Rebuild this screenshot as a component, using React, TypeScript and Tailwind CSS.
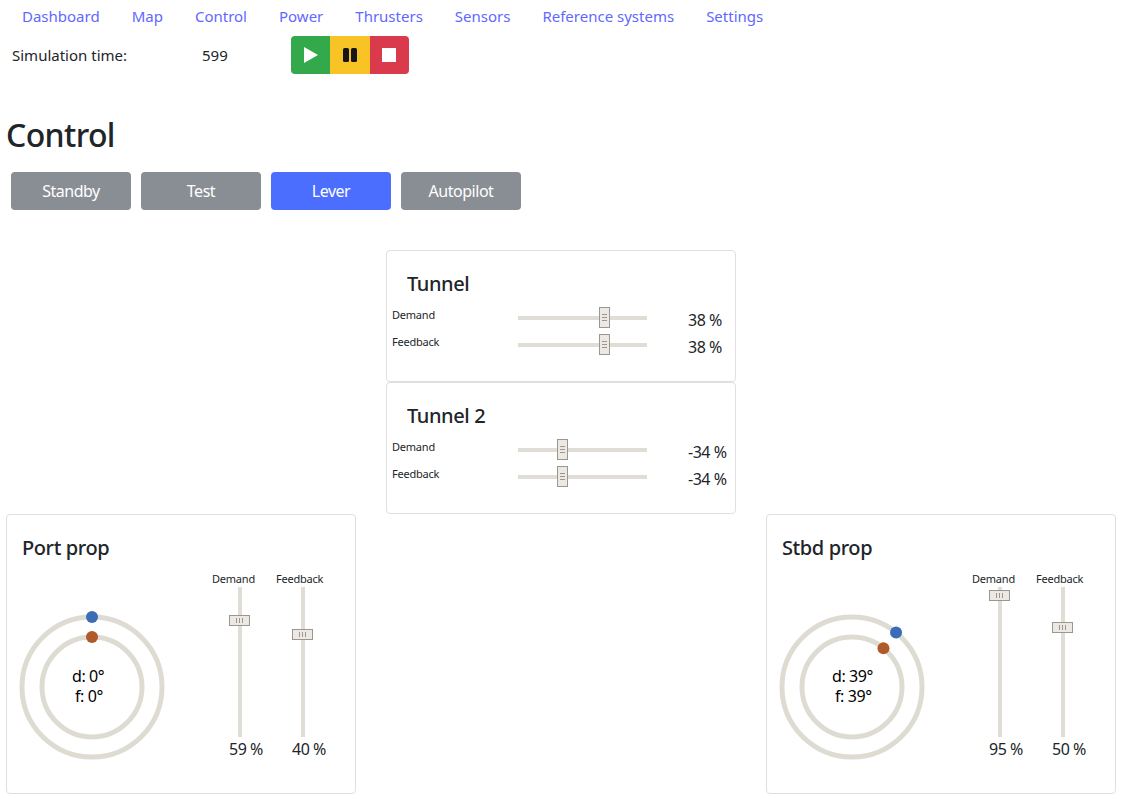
import React from "react";

const links = ["Dashboard", "Map", "Control", "Power", "Thrusters", "Sensors", "Reference systems", "Settings"];

const modes = [
  { name: "Standby", active: false },
  { name: "Test", active: false },
  { name: "Lever", active: true },
  { name: "Autopilot", active: false },
];

function HSlider({ value }: { value: number }) {
  const left = ((value + 100) / 200) * 118;
  return (
    <div className="relative w-[129px] h-[21px] flex items-center">
      <div className="w-full h-1 bg-[#e0dcd6]" />
      <div
        className="absolute top-0 w-[11px] h-[21px] border border-[#9c978e] bg-[#ece9e4] flex flex-col items-center justify-center gap-[2px]"
        style={{ left }}
      >
        <span className="w-[5px] h-px bg-[#9c978e]" />
        <span className="w-[5px] h-px bg-[#9c978e]" />
        <span className="w-[5px] h-px bg-[#9c978e]" />
      </div>
    </div>
  );
}

function VSlider({ value }: { value: number }) {
  const top = (1 - (value + 100) / 200) * 139;
  return (
    <div className="relative h-[150px] w-[21px] flex justify-center">
      <div className="h-full w-1 bg-[#e0dcd6]" />
      <div
        className="absolute left-0 w-[21px] h-[11px] border border-[#9c978e] bg-[#ece9e4] flex items-center justify-center gap-[2px]"
        style={{ top }}
      >
        <span className="h-[5px] w-px bg-[#9c978e]" />
        <span className="h-[5px] w-px bg-[#9c978e]" />
        <span className="h-[5px] w-px bg-[#9c978e]" />
      </div>
    </div>
  );
}

function TunnelCard({ title, demand, feedback }: { title: string; demand: number; feedback: number }) {
  const rows = [
    { label: "Demand", value: demand },
    { label: "Feedback", value: feedback },
  ];
  return (
    <div className="h-[132px] border border-[#dfdfdf] rounded pt-[21px] pl-[5px]">
      <h5 className="ml-[15px] text-[20px] leading-6 font-medium text-[#212529] tracking-[-0.02em]">{title}</h5>
      <div className="mt-[11px]">
        {rows.map((row) => (
          <div key={row.label} className="flex items-start h-[27px]">
            <div className="w-[126px] text-[11px] leading-4 text-[#212529] tracking-[-0.02em]">{row.label}</div>
            <HSlider value={row.value} />
            <div className="ml-[41px] mt-px text-[16px] leading-6 whitespace-nowrap text-[#212529] tracking-[-0.03em]">
              {row.value} %
            </div>
          </div>
        ))}
      </div>
    </div>
  );
}

function Rings({ angle }: { angle: number }) {
  const rad = (angle * Math.PI) / 180;
  const cx = 85;
  const cy = 116;
  return (
    <svg width="205" height="200" viewBox="0 0 205 200" className="shrink-0">
      <circle cx={cx} cy={cy} r="70" fill="none" stroke="#dedcd2" strokeWidth="5" />
      <circle cx={cx} cy={cy} r="50" fill="none" stroke="#dedcd2" strokeWidth="5" />
      <circle cx={cx + 70 * Math.sin(rad)} cy={cy - 70 * Math.cos(rad)} r="6" fill="#3a6db5" />
      <circle cx={cx + 50 * Math.sin(rad)} cy={cy - 50 * Math.cos(rad)} r="6" fill="#b05a2a" />
      <text x="65" y="111" fontSize="16" fill="#000" letterSpacing="-0.4">d: {angle}°</text>
      <text x="68" y="131" fontSize="16" fill="#000" letterSpacing="-0.4">f: {angle}°</text>
    </svg>
  );
}

function PropCard({ title, angle, demand, feedback }: { title: string; angle: number; demand: number; feedback: number }) {
  return (
    <div className="h-[280px] border border-[#dfdfdf] rounded pt-[21px]">
      <h5 className="ml-[15px] text-[20px] leading-6 font-medium text-[#212529] tracking-[-0.02em]">{title}</h5>
      <div className="flex mt-[11px]">
        <Rings angle={angle} />
        <div className="w-[64px]">
          <div className="text-[11px] leading-4 text-[#212529] whitespace-nowrap tracking-[-0.02em]">Demand</div>
          <div className="ml-[17px]">
            <VSlider value={demand} />
            <div className="text-[16px] leading-6 whitespace-nowrap text-[#212529] tracking-[-0.03em]">{demand} %</div>
          </div>
        </div>
        <div className="w-[64px]">
          <div className="text-[11px] leading-4 text-[#212529] whitespace-nowrap tracking-[-0.02em]">Feedback</div>
          <div className="ml-[16px]">
            <VSlider value={feedback} />
            <div className="text-[16px] leading-6 whitespace-nowrap text-[#212529] tracking-[-0.03em]">{feedback} %</div>
          </div>
        </div>
      </div>
    </div>
  );
}

export default function App() {
  return (
    <div className="w-[1126px] h-[799px] overflow-hidden bg-white text-[#212529] font-['Noto_Sans',sans-serif]">
      {/* nav */}
      <nav className="flex pl-[6px] h-[36px] pt-[4px]">
        {links.map((l) => (
          <a key={l} className="px-4 text-[15px] leading-6 text-[#5f68ff] whitespace-nowrap">
            {l}
          </a>
        ))}
      </nav>

      {/* simulation bar */}
      <div className="flex items-center h-[38px] pl-[12px]">
        <div className="w-[190px] text-[15px]">Simulation time:</div>
        <div className="w-[89px] text-[15px]">599</div>
        <div className="flex rounded overflow-hidden w-[118px] h-[38px]">
          <button className="flex-1 bg-[#34a94b] flex items-center justify-center">
            <svg width="16" height="16" viewBox="0 0 16 16"><polygon points="1,0 15,8 1,16" fill="#fff" /></svg>
          </button>
          <button className="flex-1 bg-[#f7c325] flex items-center justify-center">
            <svg width="14" height="14" viewBox="0 0 14 14" fill="#16161a">
              <rect x="0" y="0" width="6" height="14" rx="1.5" />
              <rect x="8" y="0" width="6" height="14" rx="1.5" />
            </svg>
          </button>
          <button className="flex-1 bg-[#d93a4c] flex items-center justify-center">
            <div className="w-[14px] h-[14px] bg-white" />
          </button>
        </div>
      </div>

      <h2 className="pl-[6px] mt-[37px] h-[48px] text-[32px] leading-[48px] font-medium tracking-[-0.02em]">Control</h2>

      <div className="flex gap-[10px] pl-[11px] mt-[13px]">
        {modes.map((m) =>
          m.active ? (
            <button key={m.name} className="w-[120px] h-[38px] rounded text-[16px] text-white bg-[#4b6eff] tracking-[-0.03em]">
              {m.name}
            </button>
          ) : (
            <button key={m.name} className="w-[120px] h-[38px] rounded text-[16px] text-white bg-[#888e94] tracking-[-0.03em]">
              {m.name}
            </button>
          )
        )}
      </div>

      <div className="grid grid-cols-[350px_350px_350px] gap-x-[30px] pl-[6px] mt-[40px]">
        <div className="col-start-2">
          <TunnelCard title="Tunnel" demand={38} feedback={38} />
        </div>
        <div className="col-start-2">
          <TunnelCard title="Tunnel 2" demand={-34} feedback={-34} />
        </div>
        <div className="col-start-1">
          <PropCard title="Port prop" angle={0} demand={59} feedback={40} />
        </div>
        <div className="col-start-3">
          <PropCard title="Stbd prop" angle={39} demand={95} feedback={50} />
        </div>
      </div>
    </div>
  );
}
